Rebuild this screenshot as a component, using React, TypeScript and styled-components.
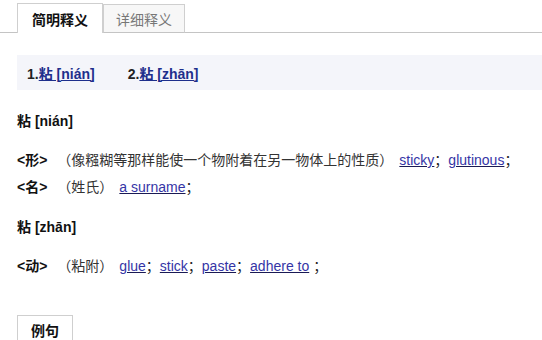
import styled, { createGlobalStyle } from "styled-components";

const Global = createGlobalStyle`
  body {
    margin: 0;
    background: #fff;
    font-family: "Liberation Sans", "Noto Sans CJK SC", sans-serif;
    font-size: 14px;
    color: #222;
  }
`;

const Page = styled.div`
  width: 542px;
  height: 340px;
  overflow: hidden;
`;

const TabBar = styled.div`
  display: flex;
  align-items: flex-end;
  height: 32px;
  padding-left: 17px;
  border-bottom: 1px solid #c4c4c4;
`;

const Tab = styled.div<{ $active?: boolean }>`
  box-sizing: border-box;
  height: ${(p) => (p.$active ? "30px" : "29px")};
  margin-bottom: -1px;
  padding: 0 ${(p) => (p.$active ? "14px" : "12px")};
  display: flex;
  align-items: center;
  border: 1px solid #cfcfcf;
  border-bottom: ${(p) => (p.$active ? "none" : "1px solid #c4c4c4")};
  background: ${(p) => (p.$active ? "#fff" : "#f7f7f7")};
  color: ${(p) => (p.$active ? "#111" : "#777")};
  font-weight: ${(p) => (p.$active ? "bold" : "normal")};
  font-size: 14px;
`;

const Body = styled.div`
  padding-left: 17px;
`;

const Senses = styled.div`
  margin-top: 22px;
  height: 35px;
  background: #f4f5fa;
  display: flex;
  align-items: center;
  gap: 33px;
  padding-left: 10px;
  font-weight: bold;
`;

const SenseLink = styled.a`
  color: #1e2f8c;
  text-decoration: underline;
  cursor: pointer;
`;

const Heading = styled.div<{ $gap: number }>`
  margin-top: ${(p) => p.$gap}px;
  line-height: 20px;
  font-weight: bold;
  color: #111;
`;

const Defs = styled.div`
  margin-top: 16px;
  line-height: 27px;
`;

const Def = styled.div`
  white-space: nowrap;
`;

const Pos = styled.b`
  color: #111;
  margin-right: 10px;
`;

const Note = styled.span`
  color: #333;
  margin-right: 6px;
`;

const Word = styled.a`
  color: #3535a6;
  text-decoration: underline;
  text-decoration-color: #1a1a55;
  cursor: pointer;
`;

const ExampleTab = styled.div`
  box-sizing: border-box;
  margin-top: 35px;
  width: 56px;
  height: 29px;
  display: flex;
  align-items: center;
  justify-content: center;
  border: 1px solid #cfcfcf;
  font-weight: bold;
  color: #111;
`;

function WordList({ words, spaceLast }: { words: string[]; spaceLast?: boolean }) {
  return (
    <>
      {words.map((w, i) => (
        <span key={w}>
          <Word>{w}</Word>
          {spaceLast && i === words.length - 1 ? " ；" : "；"}
        </span>
      ))}
    </>
  );
}

export default function App() {
  return (
    <Page>
      <Global />
      <TabBar>
        <Tab $active>简明释义</Tab>
        <Tab>详细释义</Tab>
      </TabBar>
      <Body>
        <Senses>
          <span>
            1.<SenseLink>粘 [nián]</SenseLink>
          </span>
          <span>
            2.<SenseLink>粘 [zhān]</SenseLink>
          </span>
        </Senses>

        <Heading $gap={21}>粘 [nián]</Heading>
        <Defs>
          <Def>
            <Pos>&lt;形&gt;</Pos>
            <Note>（像糨糊等那样能使一个物附着在另一物体上的性质）</Note>
            <WordList words={["sticky", "glutinous"]} />
          </Def>
          <Def>
            <Pos>&lt;名&gt;</Pos>
            <Note>（姓氏）</Note>
            <WordList words={["a surname"]} />
          </Def>
        </Defs>

        <Heading $gap={16}>粘 [zhān]</Heading>
        <Defs>
          <Def>
            <Pos>&lt;动&gt;</Pos>
            <Note>（粘附）</Note>
            <WordList words={["glue", "stick", "paste", "adhere to"]} spaceLast />
          </Def>
        </Defs>

        <ExampleTab>例句</ExampleTab>
      </Body>
    </Page>
  );
}
